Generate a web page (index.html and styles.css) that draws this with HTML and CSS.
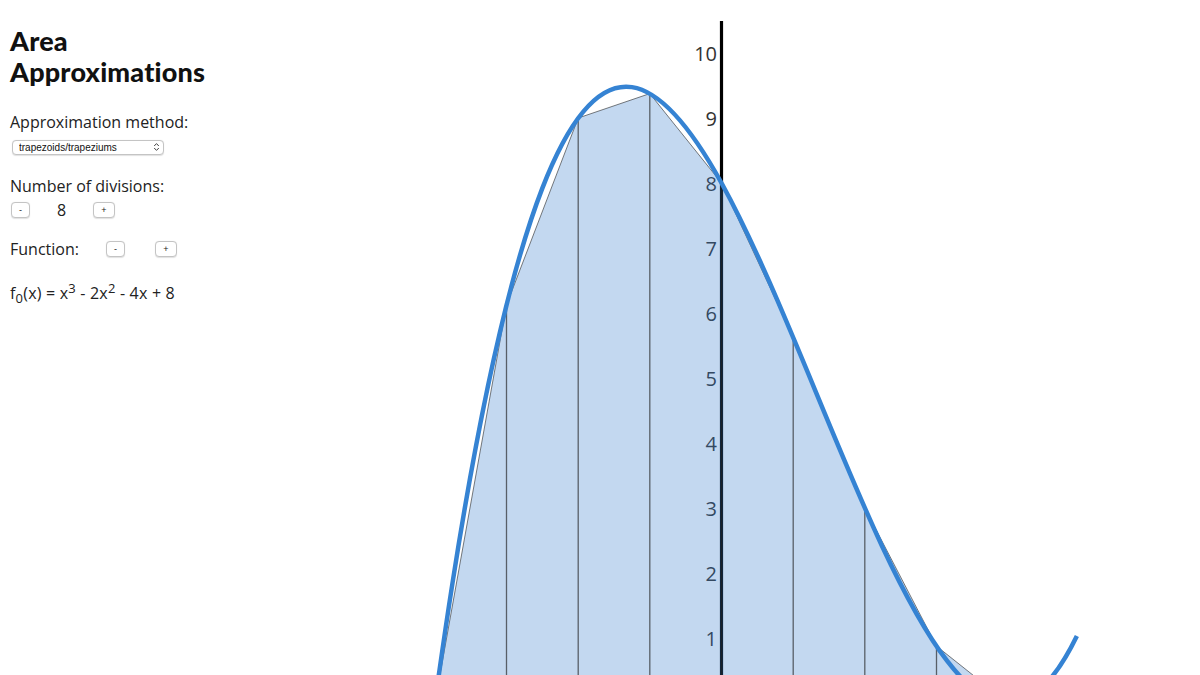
FILE: index.html
```html
<!DOCTYPE html>
<html>
<head>
<meta charset="utf-8">
<title>Area Approximations</title>
<link rel="stylesheet" href="styles.css">
</head>
<body>
<div class="app">
  <aside class="panel">
    <h1 class="title">Area<br>Approximations</h1>
    <div class="field method">
      <div class="label">Approximation method:</div>
      <div class="select-wrap">
        <select class="select"><option>trapezoids/trapeziums</option></select>
        <svg class="chev" width="7" height="10" viewBox="0 0 7 10"><path d="M1.2 4 L3.5 1.6 L5.8 4 M1.2 6 L3.5 8.4 L5.8 6" fill="none" stroke="#444" stroke-width="1"/></svg>
      </div>
    </div>
    <div class="field divisions">
      <div class="label">Number of divisions:</div>
      <div class="stepper">
        <button class="btn btn-minus">-</button>
        <span class="count">8</span>
        <button class="btn btn-plus">+</button>
      </div>
    </div>
    <div class="field func-row">
      <span class="label">Function:</span>
      <button class="btn btn-fminus">-</button>
      <button class="btn btn-fplus">+</button>
    </div>
    <div class="formula">f<sub>0</sub>(x) = x<sup>3</sup> - 2x<sup>2</sup> - 4x + 8</div>
  </aside>
  <svg class="graph" width="970" height="675" viewBox="230 0 970 675">
    <g class="labels">
      <text x="717" y="53">10</text>
      <text x="717" y="118">9</text>
      <text x="717" y="183">8</text>
      <text x="717" y="248">7</text>
      <text x="717" y="313">6</text>
      <text x="717" y="378">5</text>
      <text x="717" y="443">4</text>
      <text x="717" y="508">3</text>
      <text x="717" y="573">2</text>
      <text x="717" y="638">1</text>
    </g>
    <line class="axis" x1="721.5" y1="21" x2="721.5" y2="703"/>
    <polygon class="area" points="434.9,703 506.5,304.9 578.2,118 649.8,93.6 721.5,183 793.2,337.4 864.8,508 936.5,646.1 1008.1,703"/>
    <polyline class="edge" points="434.9,703 506.5,304.9 578.2,118 649.8,93.6 721.5,183 793.2,337.4 864.8,508 936.5,646.1 1008.1,703"/>
    <g class="dividers">
      <line x1="506.5" y1="304.9" x2="506.5" y2="703"/>
      <line x1="578.2" y1="118" x2="578.2" y2="703"/>
      <line x1="649.8" y1="93.6" x2="649.8" y2="703"/>
      <line x1="721.5" y1="183" x2="721.5" y2="703"/>
      <line x1="793.2" y1="337.4" x2="793.2" y2="703"/>
      <line x1="864.8" y1="508" x2="864.8" y2="703"/>
      <line x1="936.5" y1="646.1" x2="936.5" y2="703"/>
    </g>
    <path class="curve" d="M363.25 1361.125 C482.67 20.5 602.08 -33.67 721.5 183 C839.96 397.93 958.42 879.39 1076.88 635.91"/>
  </svg>
</div>
</body>
</html>
```

FILE: styles.css
```css
html, body {
  margin: 0;
  padding: 0;
  background: #ffffff;
  overflow: hidden;
}

.app {
  display: flex;
  width: 1200px;
  height: 675px;
}

.panel {
  width: 220px;
  flex: 0 0 220px;
  padding: 25px 0 0 10px;
  font-family: "Open Sans", "Liberation Sans", sans-serif;
  color: #222;
}

.title {
  margin: 0;
  font-family: Lato, "DejaVu Sans", sans-serif;
  font-weight: 900;
  font-size: 27px;
  line-height: 31px;
  color: #111;
  letter-spacing: 0.2px;
}

.label {
  font-size: 16px;
  line-height: 22px;
}

.method {
  margin-top: 24px;
}

.select-wrap {
  position: relative;
  width: 152px;
  margin: 7px 0 0 2px;
}

.select {
  -webkit-appearance: none;
  appearance: none;
  display: block;
  width: 152px;
  height: 15px;
  box-sizing: border-box;
  padding: 0 0 0 6px;
  border: 1px solid #c4c4c4;
  border-radius: 4px;
  background: #ffffff;
  font-family: "Liberation Sans", Arial, sans-serif;
  font-size: 10px;
  line-height: 13px;
  color: #111;
  box-shadow: 0 0.5px 1px rgba(0,0,0,0.12);
}

.chev {
  position: absolute;
  right: 4px;
  top: 2px;
}

.divisions {
  margin-top: 20px;
}

.stepper {
  display: flex;
  align-items: center;
  margin-top: 2px;
  height: 22px;
}

.btn {
  box-sizing: border-box;
  height: 16px;
  padding: 0;
  border: 1px solid #c4c4c4;
  border-radius: 4px;
  background: #ffffff;
  font-family: "Liberation Sans", Arial, sans-serif;
  font-size: 9px;
  line-height: 13px;
  color: #222;
  box-shadow: 0 0.5px 1px rgba(0,0,0,0.12);
}

.btn-minus {
  width: 19px;
  margin-left: 1px;
}

.count {
  width: 63px;
  text-align: center;
  font-size: 16px;
  line-height: 22px;
}

.btn-plus {
  width: 22px;
}

.func-row {
  display: flex;
  align-items: center;
  margin-top: 17px;
  height: 22px;
}

.btn-fminus {
  width: 19px;
  margin-left: 27px;
}

.btn-fplus {
  width: 22px;
  margin-left: 30px;
}

.formula {
  margin-top: 23px;
  font-size: 16px;
  line-height: 20px;
  letter-spacing: 0.2px;
}

.formula sub,
.formula sup {
  font-size: 13px;
  line-height: 0;
}

.graph {
  flex: 0 0 970px;
  display: block;
}

.labels text {
  font-family: "Open Sans", "Liberation Sans", sans-serif;
  font-size: 20px;
  fill: #333;
  text-anchor: end;
  dominant-baseline: central;
}

.axis {
  stroke: #000;
  stroke-width: 3.2;
}

.area {
  fill: rgba(55, 125, 205, 0.3);
  stroke: none;
}

.edge {
  fill: none;
  stroke: rgba(40, 40, 40, 0.6);
  stroke-width: 1;
}

.dividers line {
  stroke: rgba(30, 30, 30, 0.65);
  stroke-width: 1.3;
}

.curve {
  fill: none;
  stroke: #3583d3;
  stroke-width: 4.5;
}
```
